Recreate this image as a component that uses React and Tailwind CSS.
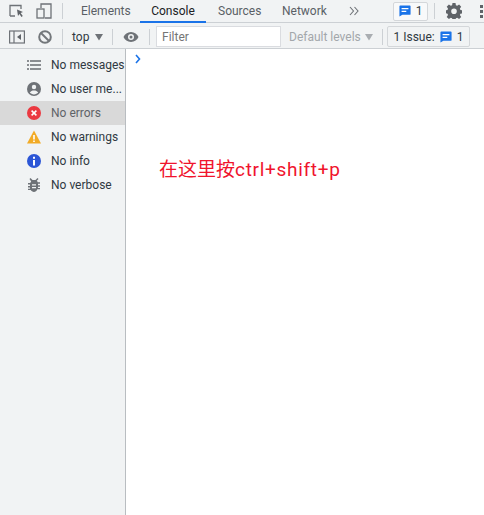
import React from 'react';

const Msg = ({ className }) => (
  <svg viewBox="0 0 14 14" className={className}>
    <path d="M1.500 0.500h11a1 1 0 0 1 1 1v9a1 1 0 0 1-1 1H4L.5 13.500V1.500a1 1 0 0 1 1-1z" fill="#1a73e8" />
    <path d="M3 3.600h8v1.500H3zM3 6.800h5.500v1.500H3z" fill="#fff" />
  </svg>
);

const Caret = ({ className }) => (
  <svg viewBox="0 0 8 8" className={className}><path d="M0 1h8L4 7.500z" fill="currentColor" /></svg>
);

const Sep = ({ className }) => <div className={'w-px h-4 bg-[#ccd0d4] shrink-0 ' + className} />;

const icons = {
  list: (
    <svg viewBox="0 0 14 14" className="w-[14px] h-[14px]">
      <path d="M0 2h2v2H0zM3 2h11v2H3zM0 6h2v2H0zM3 6h11v2H3zM0 10h2v2H0zM3 10h11v2H3z" fill="#8a8d91" />
    </svg>
  ),
  user: (
    <svg viewBox="0 0 14 14" className="w-[14px] h-[14px]">
      <circle cx="7" cy="7" r="7" fill="#6e7277" />
      <circle cx="7" cy="5" r="2.200" fill="#f1f3f4" />
      <path d="M2.800 10.600c.8-1.600 2.500-2.200 4.200-2.200s3.400.6 4.200 2.200C10.200 11.800 8.700 12.400 7 12.400s-3.200-.6-4.200-1.800z" fill="#f1f3f4" />
    </svg>
  ),
  error: (
    <svg viewBox="0 0 14 14" className="w-[14px] h-[14px]">
      <circle cx="7" cy="7" r="7" fill="#eb3941" />
      <path d="M4.600 4.600l4.800 4.800M9.400 4.600L4.600 9.400" stroke="#fff" strokeWidth="1.500" />
    </svg>
  ),
  warning: (
    <svg viewBox="0 0 14 14" className="w-[14px] h-[14px]">
      <path d="M7 .5L14 13.500H0z" fill="#f2ab26" />
      <path d="M6.200 5h1.600v4.600H6.200zM6.200 10.500h1.600v1.600H6.200z" fill="#fff" />
    </svg>
  ),
  info: (
    <svg viewBox="0 0 14 14" className="w-[14px] h-[14px]">
      <circle cx="7" cy="7" r="7" fill="#2c56d6" />
      <path d="M6 6h2v5.500H6zM6 2.800h2v2H6z" fill="#fff" />
    </svg>
  ),
  bug: (
    <svg viewBox="0 0 14 14" className="w-[14px] h-[14px]">
      <path fillRule="evenodd" d="M3.500 0l2 2h3l2-2 1 1-1.700 1.700c.5.400.8 1 1 1.600H13v1.400h-2v1.600h2v1.400h-2v.6c0 .2 0 .4-.1.600H13v1.400h-2.700C9.700 13.200 8.400 14 7 14s-2.700-.8-3.300-1.900H1v-1.400h2.100c-.1-.2-.1-.4-.1-.6v-.6H1V8.100h2V6.500H1V5.100h2.200c.2-.6.5-1.200 1-1.600L2.500 1z" fill="#6e7277" />
      <path d="M5 6.200h4v1.300H5zM5 9h4v1.300H5z" fill="#f1f3f4" />
    </svg>
  ),
};

const levels = [
  { icon: 'list', label: 'No messages' },
  { icon: 'user', label: 'No user me...' },
  { icon: 'error', label: 'No errors', active: true },
  { icon: 'warning', label: 'No warnings' },
  { icon: 'info', label: 'No info' },
  { icon: 'bug', label: 'No verbose' },
];

export default function App() {
  return (
    <div className="w-[484px] h-[515px] flex flex-col overflow-hidden bg-white text-[12px] text-[#303942] font-['Roboto','Noto_Sans_CJK_SC',sans-serif]">
      {/* tabs */}
      <div className="h-[23px] flex items-center shrink-0 bg-[#f1f3f4] border-b border-[#ccd0d4]">
        <svg viewBox="0 0 16 16" className="w-4 h-4 ml-[9px] shrink-0">
          <path d="M1 13V2.500h11V6M6 13H1" fill="none" stroke="#6e7277" strokeWidth="1.300" />
          <path d="M8 6.500l6 2.400-2.400 1 2.200 3.100-1.300.9-2.100-3-1.400 2.100z" fill="#5f6368" />
        </svg>
        <svg viewBox="0 0 16 16" className="w-4 h-4 ml-[11px] shrink-0">
          <path d="M5 5V1h10v14H9" fill="none" stroke="#6e7277" strokeWidth="1.300" />
          <rect x="1" y="6" width="7" height="9" fill="none" stroke="#6e7277" strokeWidth="1.300" />
        </svg>
        <Sep className="ml-[10px]" />
        <span className="ml-[18px] w-[47px] text-[#5a5f66]">Elements</span>
        <div className="ml-[12px] h-full w-[66px] flex items-center justify-center border-b-2 border-[#1a73e8] text-[#202124] mb-[-1px]">Console</div>
        <span className="ml-[12px] w-[41px] text-[#5a5f66]">Sources</span>
        <span className="ml-[23px] w-[46px] text-[#5a5f66]">Network</span>
        <svg viewBox="0 0 10 10" className="w-[10px] h-[10px] ml-[21px] shrink-0">
          <path d="M1 1l3.500 4L1 9M5.500 1L9 5 5.500 9" fill="none" stroke="#6e7277" strokeWidth="1.100" />
        </svg>
        <div className="ml-[34px] h-[19px] w-[35px] shrink-0 flex items-center justify-center gap-[5px] bg-[#f8f9fa] border border-[#d4d7da] rounded-[2px]">
          <Msg className="w-3 h-3" />
          <span>1</span>
        </div>
        <Sep className="ml-[6px]" />
        <svg viewBox="0 0 16 16" className="w-4 h-4 ml-[11px] shrink-0">
          <path fillRule="evenodd" d="M6.500 0h3l.4 2.200 1.300.6L13.100 1.500l2.100 2.200-1.300 1.900.5 1.300 2.200.4v3l-2.200.4-.5 1.300 1.300 1.900-2.100 2.100-1.900-1.300-1.300.5-.4 2.200h-3l-.4-2.200-1.300-.5-1.900 1.300L.7 13.900 2 12l-.500-1.300L0 10.300v-3l1.500-.4L2 5.600.7 3.700l2.200-2.200 1.900 1.300 1.300-.6zM8 5.500a2.800 2.800 0 1 0 0 5.600 2.800 2.800 0 0 0 0-5.600z" fill="#5f6368" />
        </svg>
        <div className="ml-[18px] flex flex-col gap-[2px] shrink-0">
          <div className="w-[3px] h-[3px] bg-[#5f6368]" />
          <div className="w-[3px] h-[3px] bg-[#5f6368]" />
          <div className="w-[3px] h-[3px] bg-[#5f6368]" />
        </div>
      </div>

      {/* console toolbar */}
      <div className="h-[26px] flex items-center shrink-0 pt-[2px] bg-[#f1f3f4] border-b border-[#ccd0d4]">
        <svg viewBox="0 0 16 14" className="w-[16px] h-[14px] ml-[9px] shrink-0">
          <rect x=".6" y="1" width="14.800" height="12" fill="none" stroke="#6e7277" strokeWidth="1.200" />
          <path d="M5 1v12" stroke="#6e7277" strokeWidth="1.200" />
          <path d="M12 4v6L8 7z" fill="#5f6368" />
        </svg>
        <svg viewBox="0 0 14 14" className="w-[14px] h-[14px] ml-[13px] shrink-0">
          <circle cx="7" cy="7" r="5.800" fill="none" stroke="#73777b" strokeWidth="2" />
          <path d="M3 3l8 8" stroke="#73777b" strokeWidth="2" />
        </svg>
        <Sep className="ml-[10px]" />
        <span className="ml-[9px] w-[18px] text-[#303942]">top</span>
        <Caret className="w-2 h-2 ml-[5px] text-[#6e7277] shrink-0" />
        <Sep className="ml-[9px]" />
        <svg viewBox="0 0 16 12" className="w-4 h-3 ml-[10px] shrink-0">
          <path fillRule="evenodd" d="M8 1c3.500 0 6.300 2.200 7.500 5-1.200 2.800-4 5-7.500 5S1.700 8.800.5 6C1.700 3.200 4.500 1 8 1zm0 2a3 3 0 1 0 0 6 3 3 0 0 0 0-6zm0 1.500a1.500 1.500 0 1 1 0 3 1.500 1.500 0 0 1 0-3z" fill="#6e7277" />
        </svg>
        <Sep className="ml-[10px]" />
        <div className="ml-[6px] h-[21px] w-[125px] shrink-0 flex items-center px-[5px] bg-white border border-[#dadce0] text-[#757575]">Filter</div>
        <span className="ml-[8px] w-[71px] whitespace-nowrap text-[#a3a7ab]">Default levels</span>
        <Caret className="w-2 h-2 ml-[5px] text-[#a9adb1] shrink-0" />
        <Sep className="ml-[9px]" />
        <div className="ml-[4px] h-[21px] w-[83px] shrink-0 flex items-center justify-center gap-[5px] border border-[#d4d7da] rounded-[2px]">
          <span>1 Issue:</span>
          <Msg className="w-3 h-3" />
          <span>1</span>
        </div>
      </div>

      {/* body */}
      <div className="flex-1 flex min-h-0">
        <div className="w-[126px] shrink-0 bg-[#f1f3f4] border-r border-[#b9bdc1] pt-[4px]">
          {levels.map((l) => (
            <div key={l.label} className={'h-[24px] flex items-center pl-[27px] ' + (l.active ? 'bg-[#d9d9d9] text-[#5f6368]' : '')}>
              <span className="w-[24px] shrink-0">{icons[l.icon]}</span>
              <span className="whitespace-nowrap">{l.label}</span>
            </div>
          ))}
        </div>
        <div className="flex-1 min-w-0 bg-white">
          <div className="pl-[8px] pt-[5px]">
            <svg viewBox="0 0 8 10" className="w-2 h-[10px]">
              <path d="M2 1l3.500 4L2 9" fill="none" stroke="#1a73e8" strokeWidth="1.600" />
            </svg>
          </div>
          <p className="mt-[93px] ml-[33px] text-[19px] leading-[26px] whitespace-nowrap text-[#f0142d]">在这里按<span className="tracking-[0.7px]">ctrl+shift+p</span></p>
        </div>
      </div>
    </div>
  );
}
